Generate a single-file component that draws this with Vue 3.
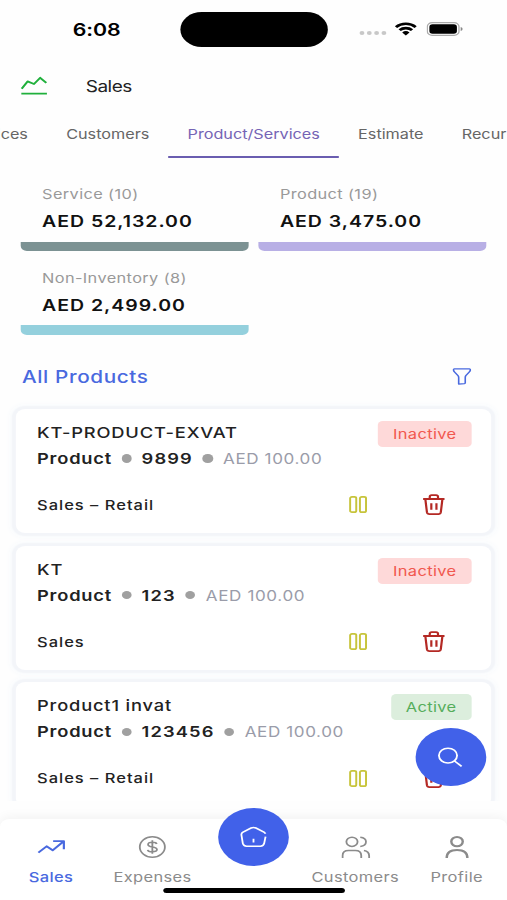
<template>
  <div class="stage">
    <div class="screen">
      <header class="status">
        <span class="clock">6:08</span>
        <span class="island"></span>
        <div class="signals">
          <span class="dots"><i v-for="n in 4" :key="n"></i></span>
          <svg class="wifi" viewBox="0 0 18 14">
            <path d="M0 4.3A12.8 12.8 0 0 1 18 4.3L16.2 6.1A10.2 10.2 0 0 0 1.8 6.1Z" />
            <path d="M3 7.3A8.5 8.5 0 0 1 15 7.3L13.2 9.1A6 6 0 0 0 4.8 9.1Z" />
            <path d="M6 10.4A4.3 4.3 0 0 1 12 10.4L9 13.4Z" />
          </svg>
          <svg class="battery" viewBox="0 0 30 14">
            <rect x="0.6" y="0.6" width="26" height="12.8" rx="4" fill="none" stroke="#aaa" stroke-width="1.1" />
            <rect x="2.3" y="2.3" width="22.6" height="9.4" rx="2.6" />
            <path d="M28 5V9Q29.6 8.4 29.6 7T28 5Z" fill="#888" />
          </svg>
        </div>
      </header>

      <div class="heading">
        <svg viewBox="0 0 22 20" class="chart">
          <path d="M0.8 12.8L5.6 5.4L10.9 8L16 1.8L21 6.8M0.5 17.6H21.5" />
        </svg>
        <h1>Sales</h1>
      </div>

      <nav class="tabs">
        <span v-for="tab in tabs" :key="tab" class="tab" :class="{ current: tab === activeTab }">{{ tab }}</span>
      </nav>

      <section class="totals">
        <div v-for="total in totals" :key="total.label" class="total" :class="total.kind">
          <span class="total-label">{{ total.label }}</span>
          <strong>{{ total.amount }}</strong>
        </div>
      </section>

      <div class="list-head">
        <h2>All Products</h2>
        <svg viewBox="0 0 16 18" class="filter">
          <path d="M1.5 1H14.5Q15.4 1 15.3 2.3Q15.2 3.4 14.3 4.4L11.4 8Q10.9 8.8 10.9 10V15.6Q10.9 16.4 10.2 16.5L5.2 17V10Q5.2 8.8 4.6 8L1.7 4.4Q0.8 3.4 0.7 2.3Q0.6 1 1.5 1Z" />
        </svg>
      </div>

      <main class="list">
        <article v-for="item in products" :key="item.name" class="card">
          <div class="card-top">
            <h3>{{ item.name }}</h3>
            <span class="badge" :class="item.status.toLowerCase()">{{ item.status }}</span>
          </div>
          <div class="meta">
            <b>Product</b><i></i><b class="code">{{ item.code }}</b><i></i><span>AED 100.00</span>
          </div>
          <div class="card-foot">
            <span class="account">{{ item.account }}</span>
            <svg viewBox="0 0 16 18" class="pause">
              <rect x="0.9" y="0.9" width="5.3" height="16.2" rx="1.6" />
              <rect x="9.4" y="0.9" width="5.3" height="16.2" rx="1.6" />
            </svg>
            <svg viewBox="0 0 18 22" class="trash">
              <path d="M0.2 5H17.8M5.6 4.8V3Q5.6 1.2 7.2 1.2H10.8Q12.4 1.2 12.4 3V4.8M2 5.2L3.3 18.2Q3.6 20.2 5.3 20.2H12.7Q14.4 20.2 14.7 18.2L16 5.2M6.9 9.2V15.8M11.1 9.2V15.8" />
            </svg>
          </div>
        </article>
      </main>

      <button class="search" aria-label="Search">
        <svg viewBox="0 0 22 22">
          <circle cx="9" cy="9" r="7.8" />
          <path d="M14.6 14.6L20.7 20.3" />
        </svg>
      </button>

      <footer class="bottom">
        <a class="item on">
          <svg viewBox="0 0 24 24"><path d="M1.5 17.6L8.2 11.3L13.2 15.3L22 6.5M13.6 6.1H22.4V14.3" /></svg>
          <span>Sales</span>
        </a>
        <a class="item">
          <svg viewBox="0 0 24 24">
            <circle cx="12" cy="12" r="10.3" />
            <path d="M15.6 9Q15.2 7.2 12 7.2Q8.5 7.2 8.5 9.4Q8.5 11.3 12 11.9Q15.8 12.5 15.8 14.6Q15.8 16.8 12 16.8Q8.5 16.8 8.2 14.8M12 5.3V18.7" />
          </svg>
          <span>Expenses</span>
        </a>
        <a class="item home">
          <span class="home-disc">
            <svg viewBox="0 0 24 24">
              <path d="M21.9 11.6L20.8 18.2Q20.3 21.2 17.6 21.2H6.4Q3.7 21.2 3.2 18.2L2.1 10Q1.8 8.3 3.4 7.1L10 3Q12 1.9 14 3L20.6 7.1Q21.5 7.8 21.8 8.8M12 13.8V17.6" />
            </svg>
          </span>
        </a>
        <a class="item">
          <svg viewBox="0 0 24 24">
            <circle cx="8.8" cy="6.8" r="4.6" />
            <path d="M1.1 23V20.5Q1.1 15.4 6 15.4H11.5Q16.4 15.4 16.4 20.5V23M15.6 2.2Q20.3 2.8 20.3 6.8T15.6 11.4M18.6 15.6Q22.9 16.4 22.9 21V23" />
          </svg>
          <span>Customers</span>
        </a>
        <a class="item bold">
          <svg viewBox="0 0 24 24">
            <circle cx="12" cy="6.6" r="4.7" />
            <path d="M3.5 23Q3.5 14.9 12 14.9T20.5 23" />
          </svg>
          <span>Profile</span>
        </a>
        <div class="indicator"></div>
      </footer>
    </div>
  </div>
</template>

<script setup>
import { ref } from "vue";

const tabs = ["Invoices", "Customers", "Product/Services", "Estimate", "Recurring"];
const activeTab = ref("Product/Services");

const totals = [
  { label: "Service (10)", amount: "AED 52,132.00", kind: "service" },
  { label: "Product (19)", amount: "AED 3,475.00", kind: "product" },
  { label: "Non-Inventory (8)", amount: "AED 2,499.00", kind: "stockless" },
];

const products = [
  { name: "KT-PRODUCT-EXVAT", code: "9899", account: "Sales – Retail", status: "Inactive" },
  { name: "KT", code: "123", account: "Sales", status: "Inactive" },
  { name: "Product1 invat", code: "123456", account: "Sales – Retail", status: "Active" },
];
</script>

<style>
body {
  margin: 0;
  background: #fefefe;
}
</style>

<style scoped>
.stage {
  width: 507px;
  height: 900px;
  overflow: hidden;
}

/* 416px wide layout stretched across the 507px window */
.screen {
  position: relative;
  display: flex;
  flex-direction: column;
  width: 416px;
  height: 900px;
  overflow: hidden;
  background: #fefefe;
  color: #222;
  font-family: Inter, "Liberation Sans", sans-serif;
  transform: scaleX(1.21875);
  transform-origin: 0 0;
}

.screen * {
  box-sizing: border-box;
}

svg {
  display: block;
  flex: none;
  fill: none;
  stroke: currentColor;
  stroke-linejoin: round;
}

h1,
h2,
h3 {
  margin: 0;
}

.status {
  display: grid;
  grid-template-columns: 147.7px 121.3px 1fr;
  align-items: center;
  flex: none;
  height: 59px;
  color: #000;
}

.clock {
  padding-left: 59.7px;
  font-size: 17.5px;
  font-weight: 600;
  line-height: 20px;
  letter-spacing: -0.1px;
}

.island {
  height: 35px;
  border-radius: 18px;
  background: #000;
}

.signals {
  display: flex;
  align-items: center;
  height: 14px;
  margin-top: -2px;
  padding-left: 26.3px;
}

.signals svg {
  fill: #000;
  stroke: none;
}

.dots {
  display: flex;
  gap: 2.2px;
  margin: 9px 7.6px 0 0;
}

.dots i {
  width: 3.7px;
  height: 4px;
  border-radius: 2px;
  background: #c8c8c8;
}

.wifi {
  width: 18px;
  height: 14px;
  margin-right: 7.5px;
}

.battery {
  width: 30px;
  height: 14px;
}

.heading {
  display: flex;
  align-items: center;
  gap: 31.3px;
  flex: none;
  height: 54px;
  padding-left: 17px;
}

.chart {
  width: 22px;
  height: 20px;
  color: #20b03c;
  stroke-width: 1.8;
}

h1 {
  font-size: 15.6px;
  font-weight: 400;
  letter-spacing: -0.4px;
}

.tabs {
  display: flex;
  flex: none;
  height: 45px;
  margin-left: -44.8px;
}

.tab {
  flex: none;
  padding: 0 15.7px;
  border-bottom: 2px solid transparent;
  color: #666;
  font-size: 13.3px;
  line-height: 42px;
}

.current {
  color: #7564b5;
  border-color: #6a5db0;
}

.totals {
  display: grid;
  grid-template-columns: 187px 187px;
  grid-auto-rows: 75.6px;
  gap: 8.2px;
  flex: none;
  margin: 17.5px 0 0 17.3px;
}

.total {
  position: relative;
  padding: 8.3px 0 0 17.2px;
}

.total::after {
  content: "";
  position: absolute;
  right: 0;
  bottom: 0;
  left: 0;
  height: 9.5px;
  border-radius: 0 0 5px 5px;
}

.service::after {
  background: #7c9293;
}

.product::after {
  background: #b8afe5;
}

.stockless::after {
  background: #94d0dd;
}

.total-label,
.total strong {
  display: block;
}

.total-label {
  color: #999;
  font-size: 13.4px;
  line-height: 20px;
  letter-spacing: 0.32px;
}

.total strong {
  margin-top: 5px;
  color: #111;
  font-size: 16px;
  font-weight: 600;
  line-height: 24px;
  letter-spacing: 0.8px;
}

.list-head {
  display: flex;
  align-items: center;
  justify-content: space-between;
  flex: none;
  height: 30px;
  margin-top: 27px;
  padding: 0 29.5px 0 18px;
  color: #4969df;
}

h2 {
  font-size: 17px;
  font-weight: 500;
  letter-spacing: 0.5px;
}

.filter {
  width: 16px;
  height: 17px;
  stroke-width: 1.4;
}

.list {
  flex: none;
  height: 401px;
  margin-top: 8px;
  padding: 9px 12.7px 0;
  overflow: hidden;
}

.card {
  height: 124px;
  margin-bottom: 12.7px;
  padding: 12px 16.5px 0 17.7px;
  border-radius: 8px;
  background: #fff;
  box-shadow: 0 0 1px 3px #f3f5f9, 0 0 5px 5px #f9fbfd;
}

.card-top {
  display: flex;
  justify-content: space-between;
  height: 26px;
}

h3 {
  font-size: 15px;
  font-weight: 500;
  line-height: 23px;
  letter-spacing: 0.68px;
}

.badge {
  height: 26px;
  padding: 0 12.2px;
  border-radius: 4px;
  font-size: 13.5px;
  line-height: 26px;
  letter-spacing: 0.3px;
}

.inactive {
  background: #fed9d9;
  color: #f1584e;
}

.active {
  background: #dceedd;
  color: #55ad5b;
}

.meta {
  display: flex;
  align-items: center;
  height: 23px;
  font-size: 15px;
}

.meta b {
  font-weight: 600;
  letter-spacing: 0.65px;
}

.meta .code {
  letter-spacing: 0.95px;
}

.meta i {
  width: 8.5px;
  height: 8.5px;
  margin: 0 8px 0 7.7px;
  border-radius: 50%;
  background: #a0a0a0;
}

.meta span {
  margin-left: 0.5px;
  color: #9a9ca9;
  font-size: 14px;
  letter-spacing: 0.5px;
}

.card-foot {
  display: flex;
  align-items: center;
  height: 30px;
  margin-top: 20px;
}

.account {
  flex: 1;
  font-size: 13.5px;
  font-weight: 500;
  letter-spacing: 0.83px;
}

.pause {
  width: 16px;
  height: 17px;
  margin-right: 45px;
  color: #c7c43b;
  stroke-width: 1.7;
}

.trash {
  width: 18px;
  height: 22px;
  margin-right: 22px;
  color: #b42924;
  stroke-width: 1.8;
}

.search {
  position: absolute;
  top: 728px;
  left: 340.5px;
  display: grid;
  place-items: center;
  width: 58px;
  height: 58px;
  padding: 0;
  border: 0;
  border-radius: 50%;
  background: #4161e9;
  color: #fff;
}

.search svg {
  width: 21px;
  height: 21px;
  stroke-width: 1.6;
}

.bottom {
  position: relative;
  display: grid;
  grid-template-columns: repeat(5, 1fr);
  flex: none;
  height: 81px;
  margin-top: 18.5px;
  border-radius: 8px 8px 0 0;
  background: #fff;
  box-shadow: 0 -2px 10px rgba(0, 0, 0, 0.05);
}

.item {
  display: flex;
  flex-direction: column;
  align-items: center;
  padding: 15.5px 0 0 0.7px;
  color: #8b8b8b;
  font-size: 13.5px;
  letter-spacing: 0.3px;
}

.item svg {
  width: 24px;
  height: 24px;
  stroke-width: 1.5;
}

.item > span:not(.home-disc) {
  margin-top: 8px;
  line-height: 20px;
}

.on {
  color: #4969df;
}

.on span {
  font-weight: 500;
}

.on svg {
  stroke-width: 1.8;
}

.bold svg {
  stroke-width: 2;
}

.home {
  padding-top: 0;
}

.home-disc {
  display: grid;
  place-items: center;
  width: 58px;
  height: 58px;
  margin-top: -11.5px;
  border-radius: 50%;
  background: #4161e9;
  color: #fff;
}

.indicator {
  position: absolute;
  bottom: 7.5px;
  left: 134px;
  width: 149px;
  height: 5px;
  border-radius: 3px;
  background: #000;
}
</style>
